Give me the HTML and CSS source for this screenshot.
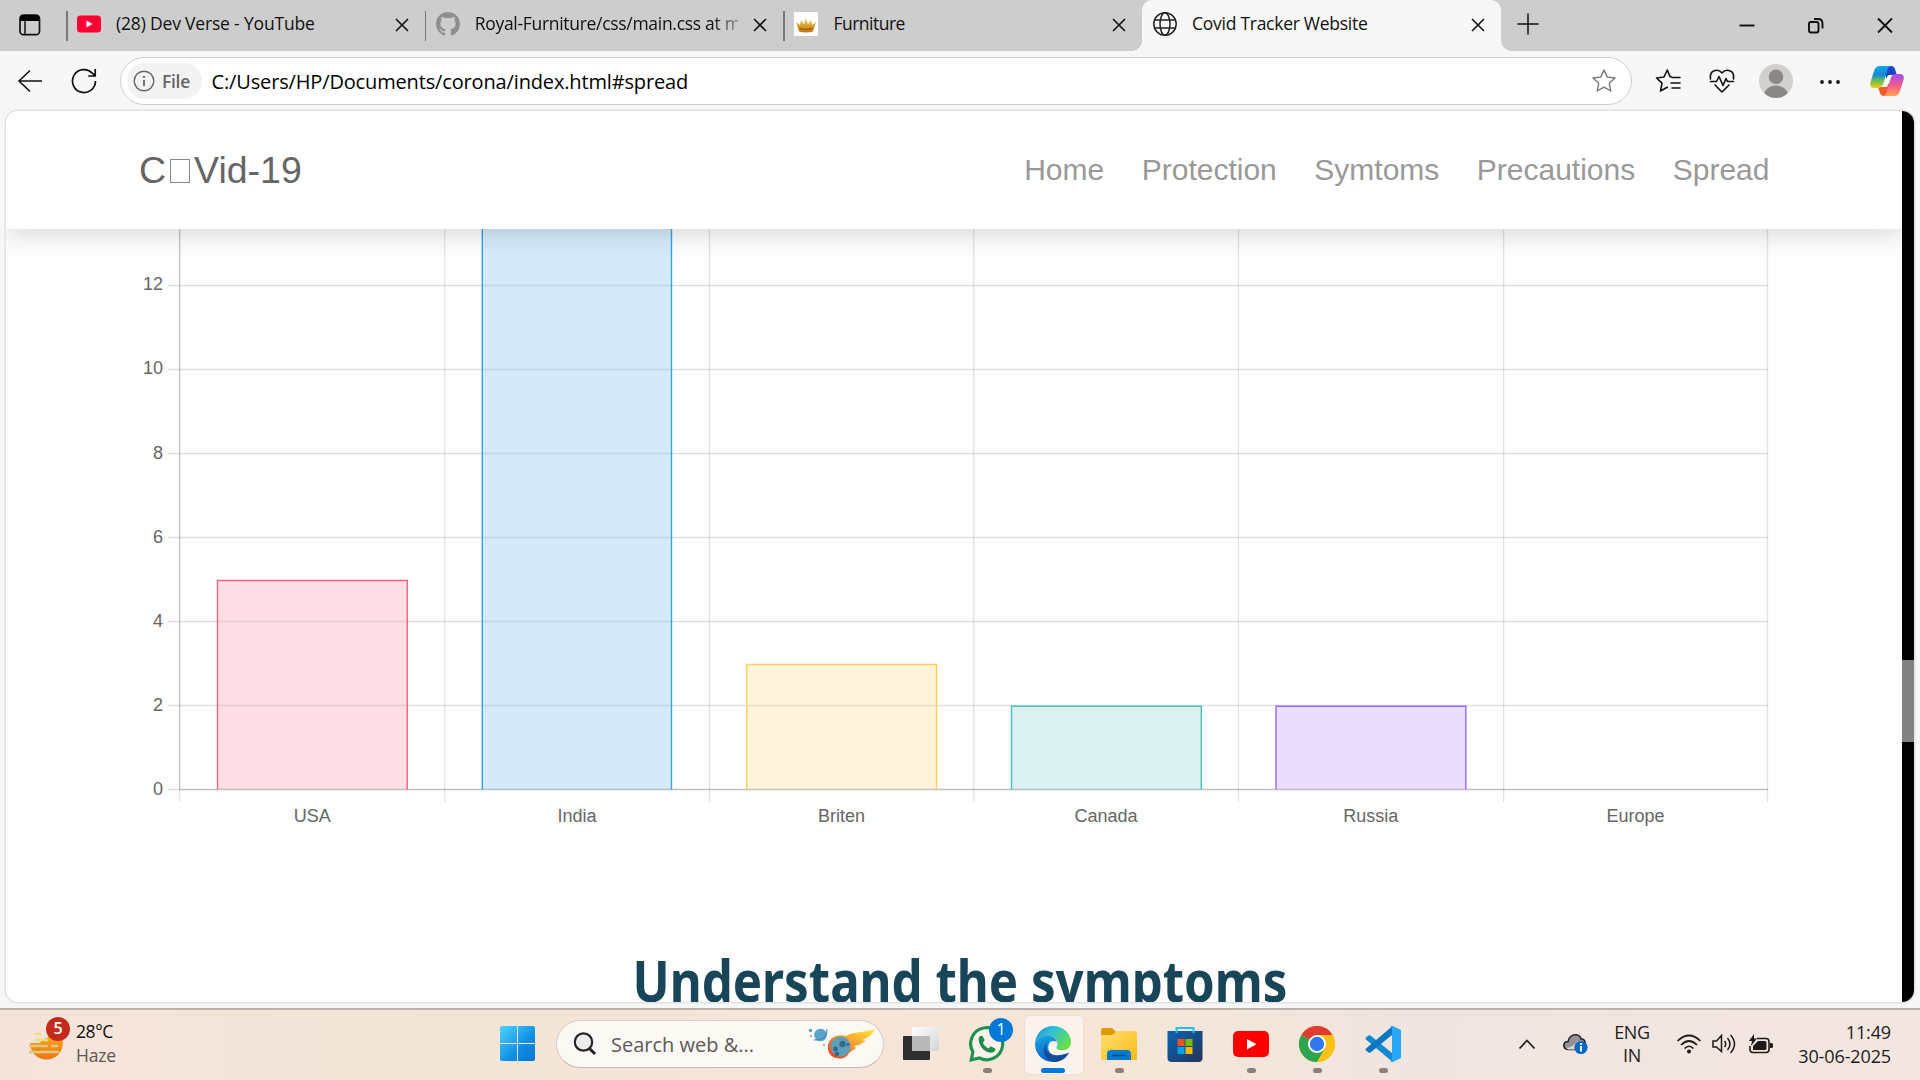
FILE: index.html
```html
<!DOCTYPE html>
<html lang="en">
<head>
<meta charset="utf-8">
<title>Covid Tracker Website</title>
<link rel="stylesheet" href="styles.css">
</head>
<body>
<div class="tabs">
  <div class="tab-menu"><svg width="22" height="22" viewBox="0 0 22 22"><rect x="1" y="1.2" width="19.5" height="19.5" rx="3.5" fill="none" stroke="#111" stroke-width="1.7"/><path d="M1 7V4a3 3 0 0 1 3-3h13.500a3 3 0 0 1 3 3v3z" fill="#000"/><path d="M6 6v14" stroke="#111" stroke-width="1.5"/></svg></div>
  <div class="tab"><svg class="fav" viewBox="0 0 24 24"><rect y="3.500" width="24" height="17" rx="3.500" fill="#ff0033"/><path d="M9.500 8.500v7l6-3.500z" fill="#fff"/></svg><span class="title t1">(28) Dev Verse - YouTube</span><svg class="x" viewBox="0 0 14 14"><path d="M1 1l12 12M13 1L1 13"/></svg></div>
  <div class="tab"><svg class="fav" viewBox="0 0 16 16"><path fill="#8c8f92" d="M8 0C3.580 0 0 3.580 0 8c0 3.540 2.290 6.530 5.470 7.590.4.070.55-.17.55-.38 0-.19-.01-.82-.01-1.490-2.010.37-2.530-.49-2.690-.94-.09-.23-.48-.94-.82-1.130-.28-.15-.68-.52-.01-.53.63-.01 1.080.58 1.230.82.72 1.210 1.870.87 2.330.66.07-.52.28-.87.51-1.070-1.780-.2-3.640-.89-3.640-3.950 0-.87.31-1.590.82-2.150-.08-.2-.36-1.020.08-2.120 0 0 .67-.21 2.200.82a7.600 7.600 0 0 1 4 0c1.530-1.040 2.200-.82 2.200-.82.44 1.100.16 1.920.08 2.120.51.56.82 1.270.82 2.150 0 3.070-1.870 3.750-3.650 3.950.29.25.54.73.54 1.480 0 1.070-.01 1.930-.01 2.200 0 .21.15.46.55.38A8 8 0 0 0 16 8c0-4.420-3.580-8-8-8z"/></svg><span class="title t2">Royal-Furniture/css/main.css at m</span><svg class="x" viewBox="0 0 14 14"><path d="M1 1l12 12M13 1L1 13"/></svg></div>
  <div class="tab"><svg class="fav" viewBox="0 0 24 24"><defs><linearGradient id="gold" x1="0" y1="0" x2="0" y2="1"><stop stop-color="#f9cf52"/><stop offset="1" stop-color="#bd7410"/></linearGradient></defs><path fill="#fff" d="M0 0h24v24H0z"/><path fill="url(#gold)" d="M5 19.500L2 10l4 3 1-5 3 4.500L12 6l2 6.500L17 8l1 5 4-3-3 9.500q-7 1.800-14 0z"/><path d="M5.500 16.500q6.500 2 13 0" stroke="#8e5208" fill="none"/></svg><span class="title t3">Furniture</span><svg class="x" viewBox="0 0 14 14"><path d="M1 1l12 12M13 1L1 13"/></svg></div>
  <div class="tab active"><svg class="fav" viewBox="0 0 24 24" fill="none" stroke="#222" stroke-width="1.500"><circle cx="12" cy="12" r="11.200"/><ellipse cx="12" cy="12" rx="5" ry="11.200"/><path d="M2 8h20M2 16h20"/></svg><span class="title t4">Covid Tracker Website</span><svg class="x" viewBox="0 0 14 14"><path d="M1 1l12 12M13 1L1 13"/></svg></div>
  <svg class="plus" viewBox="0 0 22 22"><path d="M11 .5v21M.5 11h21" stroke="#111" stroke-width="1.500"/></svg>
  <div class="window-buttons">
    <svg viewBox="0 0 20 20"><path d="M2.500 10.500h15"/></svg>
    <svg viewBox="0 0 20 20"><rect x="3" y="7" width="9.500" height="10.500" rx="2"/><path d="M8 4h4q4.500 0 4.500 4.500v5"/></svg>
    <svg viewBox="0 0 20 20"><path d="M3 3.500l14 14M17 3.500l-14 14"/></svg>
  </div>
</div>
<div class="toolbar">
  <svg class="back" width="26" height="24" viewBox="0 0 26 24" fill="none" stroke="#111" stroke-width="1.600"><path d="M25 12H2M13 1.500L2 12l11 10.500"/></svg>
  <svg class="reload" width="26" height="26" viewBox="0 0 26 26" fill="none" stroke="#111" stroke-width="1.700"><path d="M24.500 13A11.500 11.500 0 1 1 21 4.800l3.200 3M24.200 1v7h-7"/></svg>
  <div class="address">
    <div class="chip"><svg width="22" height="22" viewBox="0 0 22 22"><circle cx="11" cy="11" r="9.800" fill="none" stroke="#666" stroke-width="1.400"/><path d="M11 10v6M11 6v2" stroke="#555" stroke-width="1.600"/></svg><span>File</span></div>
    <span class="url">C:/Users/HP/Documents/corona/index.html#spread</span>
    <svg class="star" width="26" height="26" viewBox="0 0 26 26"><path d="M13 2l3.300 7.100 7.700.9-5.700 5.300 1.500 7.700-6.800-3.800L6.200 23l1.500-7.700L2 10l7.700-.9z" fill="none" stroke="#777" stroke-width="1.400" stroke-linejoin="round"/></svg>
  </div>
  <div class="tools">
    <svg viewBox="0 0 28 28" fill="none" stroke="#111" stroke-width="1.600" stroke-linejoin="round" stroke-linecap="round"><path d="M17.500 10L16 9.500 13.300 3 10 10l-7.500 1 5.500 5.200L6.500 24l6.800-3.800M18 10.500h8M17 16h9M18 21h8"/></svg>
    <svg viewBox="0 0 28 28" fill="none" stroke="#111" stroke-width="1.600" stroke-linejoin="round" stroke-linecap="round"><path d="M2.500 12C1 3 10 1 14 6c4-5 13-3 11.500 6M2.500 14.500h6l2.500-5 4 9 3-7 1.500 3h6M7 18l7 7 7-7"/></svg>
    <svg viewBox="0 0 34 34"><clipPath id="face"><circle cx="17" cy="17" r="17"/></clipPath><g clip-path="url(#face)"><path fill="#d2d0cd" d="M0 0h34v34H0z"/><circle cx="17" cy="12.800" r="7.300" fill="#8b8784"/><ellipse cx="17" cy="32" rx="12" ry="10.500" fill="#8b8784"/></g></svg>
    <svg viewBox="0 0 28 28" fill="#111"><circle cx="6" cy="15" r="1.900"/><circle cx="14" cy="15" r="1.900"/><circle cx="22" cy="15" r="1.900"/></svg>
    <svg viewBox="0 0 34 32"><defs><linearGradient id="cpa" x1="0" y1="0" x2="0" y2="1"><stop stop-color="#16a5e8"/><stop offset=".4" stop-color="#1689d8"/><stop offset=".65" stop-color="#63b95a"/><stop offset="1" stop-color="#f4cc16"/></linearGradient><linearGradient id="cpb" x1="0" y1="0" x2="0" y2="1"><stop stop-color="#a54be8"/><stop offset=".5" stop-color="#f05b91"/><stop offset="1" stop-color="#ffa24f"/></linearGradient></defs><path fill="#1746c8" d="M15 1h6q3 0 4 3l1.800 6h-5q-4 0-5.800 4z"/><path fill="#f1582f" d="M19 31h-5q-3 0-4-3l-2-6h5q4 0 6-4z"/><path fill="url(#cpa)" d="M10 1h11q-2.500 0-3.500 4l-4 13q-1.500 5-5.500 5H4.500q-5.500 0-4-6L4 6q1.500-5 6-5z"/><path fill="url(#cpb)" d="M24 31H13q2.500 0 3.500-4l4-13q1.500-5 5.500-5h3.500q5.500 0 4 6L30 26q-1.500 5-6 5z"/><path fill="#fff" d="M19 10h3q-2 1.500-3 5l-2 7h-4q1.500-1 2.500-5l1.500-4.500q.7-2.500 2-2.500z"/></svg>
  </div>
</div>
<main class="viewport">
  <div class="page">
    <header>
      <div class="brand">C<i></i>Vid-19</div>
      <nav><a>Home</a><a>Protection</a><a>Symtoms</a><a>Precautions</a><a>Spread</a></nav>
    </header>
    <svg class="chart" width="1896" height="640" viewBox="6 229 1896 640">
      <g class="grid">
        <path d="M168 789.500H1768M168 705.500H1768M168 621.500H1768M168 537.500H1768M168 453.500H1768M168 369.500H1768M168 285.500H1768"/>
        <path d="M179.700 229V802M444.700 229V802M709.500 229V802M973.700 229V802M1238.500 229V802M1503.600 229V802M1767.500 229V802"/>
        <path class="axis" d="M179.700 229V790M179 789.500H1768"/>
      </g>
      <g class="bars">
        <path d="M217.500 789.500V580.500H407.300V789.500" fill="#ff638433" stroke="#ff6384"/>
        <path d="M482.300 789.500V220H671.500V789.500" fill="#36a2eb33" stroke="#36a2eb"/>
        <path d="M746.700 789.500V664.500H936.500V789.500" fill="#ffce5633" stroke="#ffce56"/>
        <path d="M1011.500 789.500V706.300H1201.300V789.500" fill="#4bc0c033" stroke="#4bc0c0"/>
        <path d="M1276 789.500V706.300H1465.800V789.500" fill="#9966ff33" stroke="#9966ff"/>
      </g>
      <g class="ylab"><text x="163" y="290">12</text><text x="163" y="374">10</text><text x="163" y="458.500">8</text><text x="163" y="542.500">6</text><text x="163" y="626.500">4</text><text x="163" y="710.500">2</text><text x="163" y="794.500">0</text></g>
      <g class="xlab"><text x="312.300" y="821.500">USA</text><text x="577" y="821.500">India</text><text x="841.500" y="821.500">Briten</text><text x="1106" y="821.500">Canada</text><text x="1370.700" y="821.500">Russia</text><text x="1635.500" y="821.500">Europe</text></g>
    </svg>
    <svg class="heading" width="1896" height="133" viewBox="6 869 1896 133"><text x="632.500" y="1001.500" textLength="655" lengthAdjust="spacingAndGlyphs">Understand the symptoms</text></svg>
  </div>
  <div class="scroll"><div class="thumb"></div></div>
</main>
<footer class="taskbar">
  <div class="weather">
    <svg width="40" height="44" viewBox="0 0 40 44"><defs><linearGradient id="sun" x1="0" y1="0" x2="0" y2="1"><stop stop-color="#f5bc22"/><stop offset="1" stop-color="#ef7315"/></linearGradient></defs><circle cx="18.500" cy="26" r="16.500" fill="url(#sun)"/><path fill="#f5e4d9" d="M0 0h20v21q-6 0-8 5H0z"/><g stroke-width="2.600" stroke-linecap="round"><path d="M8 17h4M8 23h11" stroke="#f6d978"/><path d="M2 29h17M24 29h5M2 35h28" stroke="#e2c77e"/></g></svg>
    <span class="count red">5</span>
    <div class="wtext"><span class="temp">28°C</span><span class="haze">Haze</span></div>
  </div>
  <div class="apps">
    <svg class="start" viewBox="0 0 36 36"><defs><linearGradient id="win" x1="0" y1="0" x2="1" y2="1"><stop stop-color="#4fd4ff"/><stop offset=".6" stop-color="#1090e2"/><stop offset="1" stop-color="#0072d0"/></linearGradient></defs><path fill="url(#win)" d="M2 0h15v17H0V2q0-2 2-2zM18 0h15q2 0 2 2v15H18zM0 18h17v17H2q-2 0-2-2zM18 18h17v15q0 2-2 2H18z"/></svg>
    <div class="search">
      <svg width="24" height="24" viewBox="0 0 24 24"><circle cx="10.500" cy="10" r="8.700" fill="#ececea" stroke="#252525" stroke-width="2.200"/><path d="M16.500 16.500l5.500 5.500" stroke="#252525" stroke-width="3"/></svg>
      <span>Search web &amp;...</span>
      <svg class="comet" width="68" height="32" viewBox="0 0 68 32"><defs><linearGradient id="fire" x1="0" y1="1" x2="1" y2="0"><stop offset=".1" stop-color="#ed4a24"/><stop offset=".5" stop-color="#f99a31"/><stop offset="1" stop-color="#ffec35"/></linearGradient></defs><path fill="url(#fire)" d="M20 17C22 8 31 6 38 8c9-5 17-3 29-7-3 6-7 9-13 11l4 1-7 4-5 1 2 2-7 5c-3 6-9 6-13 5-5-1-9-6-8-13z"/><circle cx="32.500" cy="18.500" r="10" fill="#5c9fba"/><circle cx="34.500" cy="16" r="3.200" fill="#3b6683"/><circle cx="27.500" cy="21" r="2.400" fill="#3b6683"/><circle cx="40" cy="16.500" r="1.600" fill="#3b6683"/><circle cx="29" cy="26" r="2.300" fill="#3b6683"/><circle cx="12.500" cy="7" r="6.300" fill="#5aa3cd"/><path d="M6 12q14 1 13-11" fill="none" stroke="#4a7e9e"/><g fill="#5aa3cd"><circle cx="2.500" cy="2.500" r="1.800"/><circle cx="3" cy="8" r="1"/><circle cx="16" cy="17" r="1"/></g></svg>
    </div>
    <svg class="app tv" viewBox="0 0 36 36"><defs><linearGradient id="glass" x1="0" y1="0" x2="1" y2="1"><stop stop-color="#fff"/><stop offset="1" stop-color="#d4d4d6"/></linearGradient></defs><rect y="10" width="27" height="24" rx="1" fill="#302f2f"/><rect x="9" y="1" width="27" height="24" rx="1" fill="url(#glass)"/><path d="M9 10h18v15H9z" fill="#b9b9ba"/></svg>
    <div class="slot"><svg class="app" viewBox="0 0 36 36"><path d="M2.200 33.800l1.700-8A16 16 0 1 1 10.500 32z" fill="#fbf3ea" stroke="#1e9155" stroke-width="3.200"/><path d="M9.500 13q1-4 4-3l2.200 4-1.800 3q2 4 5.500 5.500l2.300-2.200 4.800 2.400q0 4-5 4C15 26 10 20 9.500 13z" fill="#1e8f54"/></svg><span class="count blue">1</span><b></b></div>
    <div class="slot current"><svg class="app" viewBox="0 0 36 36"><defs><linearGradient id="e1" x1="0" y1="0" x2="1" y2=".6"><stop stop-color="#2387dc"/><stop offset=".45" stop-color="#30c2d4"/><stop offset="1" stop-color="#65df46"/></linearGradient><linearGradient id="e2" x1="0" y1="0" x2=".3" y2="1"><stop stop-color="#1ca5e4"/><stop offset="1" stop-color="#0d66ca"/></linearGradient></defs><path fill="url(#e2)" d="M0 18C2 7 19 6 22 16q-6-3-8 2c-3 7 3 13 12 14l-2 3C10 39 0 29 0 18z"/><path fill="#134c99" d="M12.500 15c-6 10 5 19 21.500 11.500-3 6-8 9.500-15 9.500C9 34 6 24 12.500 15z"/><path fill="url(#e1)" d="M0 17C1 7 8 0 18 0c11 0 18 8 18 16 0 6-5 9-11 8-4-.5-4-2-3-4C25 10 10 5 0 17z"/></svg><b></b></div>
    <div class="slot"><svg class="app" viewBox="0 0 36 36"><defs><linearGradient id="fo" x1="0" y1="0" x2="1" y2="1"><stop stop-color="#ffdf72"/><stop offset="1" stop-color="#fbbc16"/></linearGradient></defs><path d="M0 4q0-2 2-2h9l4 4v7H0z" fill="#df9905"/><path d="M0 9h11l5-4h18q2 0 2 2v27H0z" fill="url(#fo)"/><path d="M6 34v-6q0-4 4-4h16q4 0 4 4v6z" fill="#0879cc"/><path d="M11 29.500h14" stroke="#064d8b" stroke-width="1.500"/></svg><b></b></div>
    <div class="slot"><svg class="app" viewBox="0 0 36 36"><defs><linearGradient id="st" x1="0" y1="0" x2="1" y2="1"><stop stop-color="#0965b6"/><stop offset="1" stop-color="#243357"/></linearGradient></defs><path fill="url(#st)" d="M.5 5h35v27q0 4-4 4h-27q-4 0-4-4z"/><path fill="#f25022" d="M10.500 13h7v7h-7z"/><path fill="#7fba00" d="M18.500 13h7v7h-7z"/><path fill="#00a4ef" d="M10.500 21h7v7h-7z"/><path fill="#ffb900" d="M18.500 21h7v7h-7z"/><path d="M9.500 7V2h17v5" fill="none" stroke="#24bff1" stroke-width="2"/></svg></div>
    <div class="slot"><svg class="app" viewBox="0 0 36 36"><rect y="5" width="36" height="26" rx="5" fill="#f00"/><path d="M14 13v10.500l9.500-5.300z" fill="#fff"/></svg><b></b></div>
    <div class="slot"><svg class="app" viewBox="0 0 36 36"><circle cx="18" cy="18" r="18" fill="#fbc116"/><path fill="#e33b2e" d="M18 18L2.400 9A18 18 0 0 1 33.600 9H18z"/><path fill="#2da44e" d="M18 18L25.800 22.500 18 36A18 18 0 0 1 2.400 9z"/><path fill="#fbc116" d="M18 9h15.600A18 18 0 0 1 18 36l8-13.500z"/><circle cx="18" cy="18" r="9" fill="#fff"/><circle cx="18" cy="18" r="7.200" fill="#3078f0"/></svg><b></b></div>
    <div class="slot"><svg class="app" viewBox="0 0 36 36"><path d="M1 11.500l2.500-2q1-.7 2 0L27 27v8.500L1 13.500q-1-1 0-2z" fill="#128bd3"/><path d="M1 24.500l2.500 2q1 .7 2 0L27 9V.5L1 22.500q-1 1 0 2z" fill="#0a78c0"/><path d="M25 0h3l8 4v28l-8 4h-3q2-1 2-3V3q0-2-2-3z" fill="#2aa7f3"/></svg><b></b></div>
  </div>
  <div class="tray">
    <svg class="chev" width="18" height="12" viewBox="0 0 18 12"><path d="M1.500 10.500L9 2.500l7.500 8" fill="none" stroke="#222" stroke-width="1.800"/></svg>
    <svg class="cloud" width="25" height="22" viewBox="0 0 25 22"><path d="M5 16.500c-6-1-5-8 0-8C7 0 17 0 18 6c5-.5 6 8 1 10.500z" fill="#949494" stroke="#222" stroke-width="1.600"/><path d="M3 15q6 0 12-7l7 6-6 2.500H5z" fill="#d9d8d7"/><circle cx="18" cy="14.500" r="6.600" fill="#0868c4"/><path d="M18 13v5.500M18 10v2" stroke="#fff" stroke-width="1.800"/></svg>
    <div class="lang"><span>ENG</span><span>IN</span></div>
    <svg class="wifi" width="26" height="22" viewBox="0 0 26 22" fill="none" stroke="#1c1c1c" stroke-width="1.700"><path d="M1.500 8q11.500-11 23 0M5 12q8-8 16 0M8.500 15.500q4.500-4.500 9 0"/><circle cx="13" cy="18.500" r="2" fill="#1c1c1c" stroke="none"/></svg>
    <svg class="vol" width="25" height="22" viewBox="0 0 25 22" fill="none" stroke="#1c1c1c" stroke-width="1.500"><path d="M1 8v6h3.500l5 4.500v-16L4.500 8zM12.500 8q2.500 3 0 6M15.500 5q5 6 0 12M18.500 2q8 9 0 18"/></svg>
    <svg class="bat" width="26" height="20" viewBox="0 0 26 20"><path d="M9 4.500h9q3 0 3 3v8q0 3-3 3H5q-3 0-3-3V12" fill="none" stroke="#1c1c1c" stroke-width="1.600"/><path d="M5 16v-4l5-5h7q1.500 0 1.500 1.500v6q0 1.500-1.500 1.500zM22 9h1.500q1.500 0 1.500 1.500v2q0 1.500-1.500 1.500H22zM6 0L1 7h3L3 12l6-7.500H6z" fill="#1c1c1c"/></svg>
    <div class="clock"><span class="time">11:49</span><span class="date">30-06-2025</span></div>
  </div>
</footer>
</body>
</html>
```
FILE: styles.css
```css
* { box-sizing: border-box; }
body { margin: 0; width: 1920px; height: 1080px; overflow: hidden; display: flex; flex-direction: column; background: #f7f7f7; font-family: "Open Sans", "Noto Sans", sans-serif; color: #111; }
svg { display: block; flex: none; }
span { white-space: nowrap; }

.tabs { height: 51px; flex: none; background: #cdcdcd; display: flex; align-items: center; }
.tab-menu { width: 66px; padding: 0 0 2px 19px; }
.tab { width: 358.700px; height: 51px; padding: 0 16px 3px 11px; display: flex; align-items: center; position: relative; }
.tab::before { content: ""; position: absolute; left: 0; top: 11px; width: 1.500px; height: 30px; background: #777; }
.tab.active { background: #f7f7f7; border-radius: 10px 10px 0 0; }
.tab.active::before { left: -10px; top: auto; bottom: 0; width: 10px; height: 10px; background: radial-gradient(circle at 0 0, #cdcdcd 9.500px, #f7f7f7 10px); }
.tab.active::after { content: ""; position: absolute; right: -10px; bottom: 0; width: 10px; height: 10px; background: radial-gradient(circle at 100% 0, #cdcdcd 9.500px, #f7f7f7 10px); }
.fav { width: 24px; height: 24px; }
.title { font-size: 17.500px; margin: -2px 0 0 15px; flex: 1; overflow: hidden; }
.t1 { letter-spacing: -.18px; }
.t2 { letter-spacing: -.3px; -webkit-mask-image: linear-gradient(90deg, #000 90%, #0005 100%); }
.t3 { letter-spacing: -.5px; }
.t4 { letter-spacing: -.27px; }
.x { width: 14px; height: 14px; margin: 2px 0 0 15px; fill: none; stroke: #111; stroke-width: 1.600; }
.plus { width: 22px; height: 22px; margin: 0 0 3px 16px; }
.window-buttons { margin-left: auto; display: flex; gap: 49px; padding: 0 25px 2px 0; }
.window-buttons svg { width: 20px; height: 20px; fill: none; stroke: #111; stroke-width: 1.900; }

.toolbar { height: 60px; flex: none; display: flex; align-items: center; }
.back { margin-left: 17px; }
.reload { margin-left: 28px; }
.address { margin-left: 23px; width: 1512px; height: 48px; border: 1.500px solid #cfcfcf; border-radius: 24px; background: #fff; display: flex; align-items: center; padding: 0 14px 0 6px; }
.chip { width: 75px; height: 36px; border-radius: 18px; background: #f3f3f3; display: flex; align-items: center; gap: 7px; padding-left: 6px; font-size: 17.500px; font-weight: 600; letter-spacing: -.3px; color: #666; }
.chip span { margin-top: -1px; }
.url { flex: 1; margin-left: 9.500px; font-size: 20px; letter-spacing: -.15px; color: #000; }
.tools { display: flex; align-items: center; margin-left: 22px; gap: 26px; }
.tools svg { width: 28px; height: 28px; }
.tools svg:nth-child(3) { width: 34px; height: 34px; margin: 0 -3px; }
.tools svg:nth-child(5) { width: 34px; height: 32px; }

.viewport { margin: 0 6px; height: 891px; flex: none; width: 1908px; border-radius: 12px; overflow: hidden; display: flex; background: #fefefe; box-shadow: 0 0 0 1.500px #e3e3e3; }
.page { flex: 1; font-family: "Liberation Sans", Arial, sans-serif; }
header { height: 118px; background: #fff; display: flex; align-items: center; justify-content: space-between; padding: 0 132.500px 0 133px; box-shadow: 0 6px 24px rgba(0,0,0,.15); position: relative; }
.brand { font-size: 37.500px; color: #666; display: flex; align-items: center; white-space: nowrap; }
.brand i { width: 20px; height: 24px; border: 1.500px solid #888; margin: 2px 4px 0; }
nav { display: flex; gap: 37.500px; font-size: 30px; color: #999; }
.grid path { fill: none; stroke: #000; stroke-opacity: .11; stroke-width: 1.300; }
.grid .axis { stroke-opacity: .14; }
.bars path { stroke-width: 1.400; }
.chart text { font-size: 18px; fill: #666; }
.ylab text { text-anchor: end; }
.xlab text { text-anchor: middle; }
.heading text { font-family: "Noto Sans", "Open Sans", sans-serif; font-weight: 700; font-size: 57px; fill: #184558; }
.scroll { width: 12px; background: #000; padding-top: 549px; }
.thumb { height: 82px; background: #828282; }

.taskbar { height: 72px; margin-top: 6px; flex: none; border-top: 2px solid #bcb0aa; display: flex; position: relative; background: linear-gradient(90deg, #f5e4da, #f3e5d8 25%, #f6e5d9 40%, #f5e6d7 58%, #f0e5e0 74%, #f3e6de); }
.weather { width: 500px; padding: 7px 0 0 28px; display: flex; position: relative; }
.wtext { display: flex; flex-direction: column; margin-left: 8px; font-size: 17.500px; line-height: 24px; padding-top: 2px; }
.temp { letter-spacing: -.4px; }
.haze { color: #5c5652; letter-spacing: -.2px; }
.count { position: absolute; width: 24px; height: 24px; border-radius: 50%; color: #fff; text-align: center; line-height: 23px; font-size: 16px; }
.red { left: 46px; top: 7px; background: #c42b1c; font-weight: 600; }
.blue { left: 35px; top: 8px; background: #0078d7; }
.apps { display: flex; align-items: center; height: 68px; }
.start { width: 36px; height: 36px; }
.search { margin-left: 20px; width: 328px; height: 48px; border: 1.500px solid #ddcdc0; border-bottom-color: #c9b9ad; border-radius: 24px; background: #fcf8f4; display: flex; align-items: center; padding: 0 7px 0 16px; font-size: 20px; color: #5c5956; }
.search span { margin-left: 14px; letter-spacing: 0; }
.comet { margin-left: auto; }
.app { width: 36px; height: 36px; }
.tv { margin: 0 15px 0 19px; }
.slot { width: 66px; height: 68px; display: flex; justify-content: center; align-items: center; position: relative; }
.slot b { position: absolute; left: 28.500px; bottom: 5px; width: 9px; height: 5px; border-radius: 3px; background: #8a817a; }
.slot.current::before { content: ""; position: absolute; left: 4px; top: 5px; width: 58px; height: 58px; border-radius: 6px; background: #fbf3ec; border: 1.500px solid #ecdfd3; }
.slot .app { position: relative; }
.slot.current b { left: 21px; width: 24px; background: #0078d7; }
.tray { flex: 1; height: 68px; display: flex; align-items: center; padding-right: 29px; justify-content: flex-end; font-size: 18px; color: #1c1c1c; }
.cloud { margin-left: 27px; }
.lang { width: 40px; margin-left: 24px; display: flex; flex-direction: column; align-items: center; line-height: 23px; letter-spacing: -.4px; }
.wifi { margin-left: 24px; }
.vol { margin-left: 10px; }
.bat { margin-left: 11px; }
.clock { margin-left: 24px; width: 93px; display: flex; flex-direction: column; align-items: flex-end; line-height: 24px; letter-spacing: -.12px; padding-bottom: 1px; }
```
